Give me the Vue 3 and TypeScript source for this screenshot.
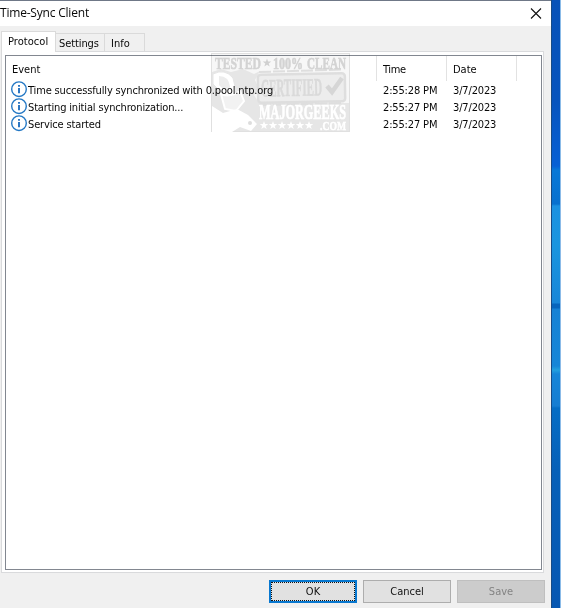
<script setup lang="ts">
interface LogEntry {
  event: string
  time: string
  date: string
}

const tabs: string[] = ['Protocol', 'Settings', 'Info']
const entries: LogEntry[] = [
  { event: 'Time successfully synchronized with 0.pool.ntp.org', time: '2:55:28 PM', date: '3/7/2023' },
  { event: 'Starting initial synchronization...', time: '2:55:27 PM', date: '3/7/2023' },
  { event: 'Service started', time: '2:55:27 PM', date: '3/7/2023' },
]
const star = 'M0-5 1.2-1.6H4.8L1.9.6 3 4 0 1.9-3 4-1.9.6-4.8-1.6H-1.2Z'
</script>

<template>
  <div class="desktop">
    <main class="window">
      <header class="titlebar">
        <span class="title">Time-Sync Client</span>
        <svg class="close" width="12" height="12" viewBox="0 0 12 12"><path d="M1 .5 11 10.5M11 .5 1 10.5" /></svg>
      </header>
      <nav class="tabs">
        <div v-for="(tab, i) in tabs" :key="tab" class="tab" :class="[tab.toLowerCase(), { active: i === 0 }]"><span>{{ tab }}</span></div>
      </nav>
      <section class="panel">
        <div class="list">
          <div class="row head">
            <span class="event">Event</span><span class="time">Time</span><span class="date">Date</span>
          </div>
          <div v-for="(entry, i) in entries" :key="i" class="row entry">
            <span class="event">
              <svg width="17" height="17" viewBox="0 0 17 17">
                <circle cx="8" cy="8.2" r="7.3" fill="#fff" stroke="#2277c4" stroke-width="1.4" />
                <path d="M8 4V5.8M8 7V12.2" stroke="#1769bd" stroke-width="1.8" />
              </svg>
              <span class="label">{{ entry.event }}</span>
            </span>
            <span class="time">{{ entry.time }}</span>
            <span class="date">{{ entry.date }}</span>
          </div>
        </div>
      </section>
      <footer class="buttons">
        <button class="ok"><span>OK</span></button>
        <button><span>Cancel</span></button>
        <button disabled><span>Save</span></button>
      </footer>
      <svg class="stamp" width="140" height="81" viewBox="0 0 140 81">
        <rect x=".5" y="1.5" width="138" height="78" fill="#f7f7f7" stroke="#e0e0e0" />
        <path d="M1 20 10 17 20 20 32 17 43 22 49 19 44 28 48 37 43 43 48 51H138V79H40H1Z" fill="#e6e6e6" />
        <path d="M2 22Q14 16 22 26L25 39 19 46 7 37 2 32Z" fill="#fff" stroke="#e5e5e5" />
        <path d="M8 24Q18 24 19 35Q15 41 8 33Z" fill="#ececec" />
        <path d="M10 42Q19 46 29 39L33 49 25 59 14 57Z" fill="#f2f2f2" stroke="#fff" stroke-width="2" />
        <path d="M1 54 12 61 26 57 37 63 46 72 40 79 29 75 21 80H1Z" fill="#fff" />
        <circle cx="39" cy="71" r="2" fill="#ddd" />
        <g fill="none" stroke="#dedede">
          <rect x="47" y="22" width="87" height="28" rx="3" fill="#ededed" stroke-width="2.5" transform="rotate(-1 90 35)" />
          <path d="M48 20 132 17.5M48 53 132 51" stroke-width="2" stroke-dasharray="12 2" />
          <path d="M116 34 121 40 131 26" stroke-width="4.5" stroke="#d6d6d6" />
        </g>
        <g class="stamp-text">
          <text x="4" y="17" font-size="17" textLength="46" fill="#d3d3d3" stroke="#d3d3d3" stroke-width=".6" lengthAdjust="spacingAndGlyphs">TESTED</text>
          <text x="62" y="17" font-size="17" textLength="30" fill="#d3d3d3" stroke="#d3d3d3" stroke-width=".6" lengthAdjust="spacingAndGlyphs">100%</text>
          <text x="96" y="17" font-size="17" textLength="39" fill="#d3d3d3" stroke="#d3d3d3" stroke-width=".6" lengthAdjust="spacingAndGlyphs">CLEAN</text>
          <text x="50" y="44" font-size="25" textLength="61" fill="#dadada" stroke="#dadada" stroke-width=".6" lengthAdjust="spacingAndGlyphs" transform="rotate(-1 80 35)">CERTIFIED</text>
          <text x="48" y="67" font-size="21" textLength="87" fill="#fff" stroke="#fff" stroke-width=".7" lengthAdjust="spacingAndGlyphs">MAJORGEEKS</text>
          <text x="109" y="78" font-size="13" textLength="26" fill="#fff" stroke="#fff" stroke-width=".5" lengthAdjust="spacingAndGlyphs">.COM</text>
        </g>
        <path :d="star" transform="translate(56 11) scale(.9)" fill="#d0d0d0" />
        <path v-for="n in 6" :key="n" :d="star" :transform="`translate(${44 + n * 9} 73.5) scale(.9)`" fill="#fff" />
      </svg>
    </main>
    <aside class="wallpaper"></aside>
  </div>
</template>

<style>
body { margin: 0; background: #fff; }
</style>
<style scoped>
.desktop { display: flex; width: 561px; height: 608px; padding-bottom: 1px; overflow: hidden; font: 11px/16px "DejaVu Sans Condensed", "DejaVu Sans", sans-serif; font-stretch: condensed; color: #080808; }
.window { position: relative; width: 551px; height: 608px; display: flex; flex-direction: column; background: #f0f0f0; box-sizing: border-box; border-top: 1px solid #6f7887; }
.titlebar { height: 25px; background: #fff; display: flex; justify-content: space-between; align-items: center; padding-right: 9px; flex: none; box-sizing: border-box; }
.title { font: 12px/18px "Open Sans", sans-serif; letter-spacing: -.2px; white-space: nowrap; padding-bottom: 1px; }
.close { stroke: #111; stroke-width: 1.1; fill: none; }
.tabs { display: flex; align-items: flex-end; height: 25px; padding-left: 1px; flex: none; }
.tab { box-sizing: border-box; height: 18px; border: 1px solid #dadada; border-bottom: 0; border-left: 0; white-space: nowrap; line-height: 19px; }
.protocol { width: 55px; padding-left: 6px; letter-spacing: .05px; }
.tab.active { height: 21px; line-height: 20px; border-left: 1px solid #dadada; background: #fff; margin-bottom: -1px; position: relative; }
.settings { width: 49px; padding-left: 3px; letter-spacing: -.1px; }
.info { width: 40px; padding-left: 6px; }
.panel { box-sizing: border-box; width: 543px; height: 522px; margin-left: 1px; padding: 3px; border: 1px solid #d9dadc; background: #fff; flex: none; }
.list { box-sizing: border-box; width: 537px; height: 515px; border: 1px solid #828790; background: #fff; }
.row { display: flex; height: 17px; white-space: nowrap; line-height: 19px; letter-spacing: -.15px; }
.head { height: 25px; line-height: 27px; letter-spacing: 0; }
.row > span { box-sizing: border-box; }
.row > .event { width: 371px; padding-left: 6px; }
.row > .time, .row > .date { width: 70px; padding-left: 6px; }
.head > span { border-right: 1px solid #e2e2e2; }
.head > .time { letter-spacing: -.4px; }
.entry .event { display: flex; padding-left: 5px; }
.entry svg { flex: none; }
.buttons { display: flex; gap: 6px; padding: 7px 0 0 269px; flex: none; }
button { box-sizing: border-box; width: 88px; height: 23px; padding: 1px 0 0; border: 1px solid #adadad; background: #e1e1e1; font: inherit; color: #111; }
button.ok { border: 2px solid #0878d0; outline: 1px dotted #111; outline-offset: -3px; }
button:disabled { background: #ccc; border-color: #bfbfbf; color: #838383; }
.stamp { position: absolute; left: 211px; top: 51px; overflow: visible; mix-blend-mode: multiply; }
.stamp-text { font-family: "Liberation Serif", serif; font-weight: 700; }
.wallpaper { width: 10px; height: 608px; box-sizing: border-box; border-right: 1px solid #8bbbe8; border-left: 1px solid #174b86; background: linear-gradient(#0752b8 0, #0754bd 100px, #0760d5 166px, #0878d7 170px, #0770cf 204px, #1b91e1 206px, #1a95df 245px, #1886d8 303px, #0765bd 304px, #0765bd 308px, #1682d5 309px, #1786d8 366px, #23a0de 370px, #1685d8 374px, #167dd2 406px, #056dc5 408px, #0760b8 470px, #0757b2 608px); }
</style>
